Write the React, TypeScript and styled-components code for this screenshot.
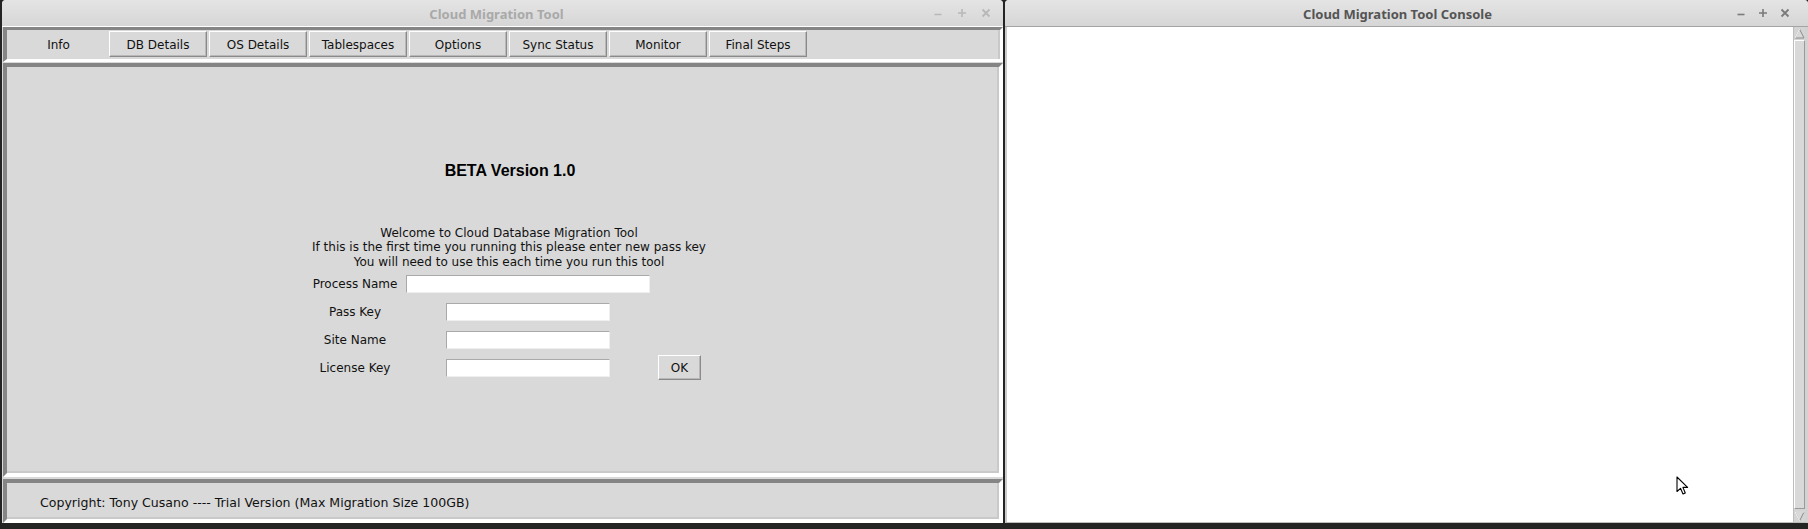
import React from "react";
import styled, { createGlobalStyle } from "styled-components";

const Global = createGlobalStyle`
  html, body { margin: 0; padding: 0; background: #242424; overflow: hidden; }
  #root { width: 1808px; height: 529px; }
  * { box-sizing: border-box; }
`;

const Desktop = styled.div`
  width: 1808px;
  height: 529px;
  background: #242424;
  display: flex;
  align-items: flex-start;
  gap: 2px;
  padding-left: 2px;
`;

const Window = styled.div<{ $w: number }>`
  width: ${(p) => p.$w}px;
  height: 523px;
  flex: none;
  display: flex;
  flex-direction: column;
  background: #d9d9d9;
  border-radius: 4px 4px 0 0;
  overflow: hidden;
`;

const TitleBar = styled.div<{ $active?: boolean; $pr: number }>`
  height: 27px;
  flex: none;
  display: grid;
  grid-template-columns: 1fr auto 1fr;
  align-items: center;
  padding-right: ${(p) => p.$pr}px;
  background: linear-gradient(#e4e4e4, #d6d6d6);
  border-bottom: 1px solid ${(p) => (p.$active ? "#a4a4a4" : "#ffffff")};
  font-family: "Noto Sans", "DejaVu Sans", sans-serif;
  font-weight: 700;
  font-size: 13px;
  color: ${(p) => (p.$active ? "#545454" : "#a9a9a9")};
`;

const Title = styled.div`
  grid-column: 2;
  white-space: nowrap;
  padding-top: 1px;
`;

const Controls = styled.div<{ $gap: number }>`
  grid-column: 3;
  justify-self: end;
  display: flex;
  align-items: center;
  gap: ${(p) => p.$gap}px;
`;

const Sunken = styled.div`
  border-style: solid;
  border-color: #858585 #ffffff #ffffff #858585;
  margin-left: 1px;
  width: 1000px;
  flex: none;
`;

const TabFrame = styled(Sunken)`
  height: 35px;
  border-width: 3px 3px 3px 4px;
  padding: 1px 0 2px 0;
  display: flex;
  gap: 2px;
  box-shadow: inset -2px 0 0 #c9c9c9;
`;

const Tab = styled.div<{ $selected?: boolean }>`
  width: ${(p) => (p.$selected ? 100 : 98)}px;
  height: 26px;
  display: flex;
  align-items: center;
  justify-content: center;
  padding-top: 2px;
  padding-left: ${(p) => (p.$selected ? 3 : 0)}px;
  font-family: "DejaVu Sans", sans-serif;
  font-size: 12px;
  color: #111;
  background: #d9d9d9;
  border: 1px solid;
  border-color: ${(p) => (p.$selected ? "#d9d9d9" : "#ffffff #8a8a8a #8a8a8a #ffffff")};
  box-shadow: ${(p) => (p.$selected ? "none" : "inset -1px -1px 0 #b8b8b8")};
`;

const MainPanel = styled(Sunken)`
  height: 414px;
  margin-top: 1px;
  border-width: 4px;
  display: flex;
  flex-direction: column;
  align-items: center;
  padding-top: 94px;
  box-shadow: inset -2px -2px 0 #c9c9c9;
`;

const Heading = styled.div`
  font-family: "Liberation Sans", Arial, sans-serif;
  font-weight: 700;
  font-size: 16px;
  line-height: 19px;
  color: #000;
  padding-left: 14px;
`;

const Welcome = styled.div`
  margin-top: 46px;
  padding-left: 12px;
  font-family: "DejaVu Sans", sans-serif;
  font-size: 12px;
  line-height: 14.3px;
  color: #111;
  text-align: center;
`;

const FormGrid = styled.div`
  margin-top: 1px;
  margin-left: 7px;
  display: grid;
  grid-template-columns: 102px 244px 59px;
  grid-auto-rows: 28px;
  align-items: center;
  font-family: "DejaVu Sans", sans-serif;
  font-size: 12px;
  color: #111;
`;

const Label = styled.div`
  grid-column: 1;
  text-align: center;
`;

const Entry = styled.div<{ $wide?: boolean }>`
  grid-column: 2;
  justify-self: center;
  width: ${(p) => (p.$wide ? 244 : 164)}px;
  height: 18px;
  background: #ffffff;
  border: 1px solid;
  border-color: #a9a9a9 #efefef #efefef #a9a9a9;
`;

const OkButton = styled.div`
  grid-column: 3;
  justify-self: center;
  width: 43px;
  height: 25px;
  display: flex;
  align-items: center;
  justify-content: center;
  background: #d9d9d9;
  border: 1px solid;
  border-color: #ffffff #8a8a8a #8a8a8a #ffffff;
  box-shadow: inset -1px -1px 0 #b8b8b8;
  font-size: 12px;
  color: #111;
`;

const Footer = styled(Sunken)`
  height: 44px;
  margin-top: 2px;
  border-width: 4px;
  display: flex;
  align-items: center;
  padding-left: 33px;
  padding-top: 2px;
  font-family: "DejaVu Sans", sans-serif;
  font-size: 12.55px;
  color: #111;
  box-shadow: inset -2px -2px 0 #c9c9c9;
`;

const ConsoleBody = styled.div`
  flex: 1;
  display: flex;
  position: relative;
  background: #ffffff;
  border-left: 2px solid #cbcbcb;
  border-right: 3px solid #d2d2d2;
  border-bottom: 1px solid #bdbdbd;
`;

const TextArea = styled.div`
  flex: 1;
  background: #ffffff;
`;

const ScrollBar = styled.div`
  width: 12px;
  flex: none;
  display: flex;
  flex-direction: column;
  background: #d4d4d4;
  border-left: 1px solid #bdbdbd;
`;

const ArrowBox = styled.div`
  height: 12px;
  flex: none;
  display: flex;
  align-items: center;
  justify-content: center;
`;

const Slider = styled.div`
  flex: 1;
  margin: 1px 0;
  background: #d9d9d9;
  border: 1px solid;
  border-color: #ffffff #9a9a9a #9a9a9a #ffffff;
`;

const Cursor = styled.svg`
  position: absolute;
  left: 669px;
  top: 449px;
`;

const WinIcons = ({ color }: { color: string }) => (
  <>
    <svg width="10" height="10" viewBox="0 0 10 10">
      <path d="M1.5 6.5 H8.5" stroke={color} strokeWidth="1.6" />
    </svg>
    <svg width="10" height="10" viewBox="0 0 10 10">
      <path d="M1 5 H9 M5 1 V9" stroke={color} strokeWidth="1.6" />
    </svg>
    <svg width="10" height="10" viewBox="0 0 10 10">
      <path d="M1.5 1.5 L8.5 8.5 M8.5 1.5 L1.5 8.5" stroke={color} strokeWidth="1.8" />
    </svg>
  </>
);

const tabs = ["DB Details", "OS Details", "Tablespaces", "Options", "Sync Status", "Monitor", "Final Steps"];

export default function App() {
  return (
    <>
      <Global />
      <Desktop>
        <Window $w={1001}>
          <TitleBar $pr={12}>
            <Title>Cloud Migration Tool</Title>
            <Controls $gap={14}>
              <WinIcons color="#b8b8b8" />
            </Controls>
          </TitleBar>
          <TabFrame>
            <Tab $selected>Info</Tab>
            {tabs.map((t) => (
              <Tab key={t}>{t}</Tab>
            ))}
          </TabFrame>
          <MainPanel>
            <Heading>BETA Version 1.0</Heading>
            <Welcome>
              Welcome to Cloud Database Migration Tool
              <br />
              If this is the first time you running this please enter new pass key
              <br />
              You will need to use this each time you run this tool
            </Welcome>
            <FormGrid>
              <Label>Process Name</Label>
              <Entry $wide />
              <Label>Pass Key</Label>
              <Entry />
              <Label>Site Name</Label>
              <Entry />
              <Label>License Key</Label>
              <Entry />
              <OkButton>OK</OkButton>
            </FormGrid>
          </MainPanel>
          <Footer>Copyright: Tony Cusano ---- Trial Version (Max Migration Size 100GB)</Footer>
        </Window>
        <Window $w={803}>
          <TitleBar $active $pr={18}>
            <Title>Cloud Migration Tool Console</Title>
            <Controls $gap={12}>
              <WinIcons color="#7a7a7a" />
            </Controls>
          </TitleBar>
          <ConsoleBody>
            <TextArea />
            <ScrollBar>
              <ArrowBox>
                <svg width="11" height="11" viewBox="0 0 11 11">
                  <path d="M5.5 1 L10 10 H1 Z" fill="#d9d9d9" stroke="#8a8a8a" strokeWidth="1" />
                  <path d="M5.5 1 L1 10" stroke="#ffffff" strokeWidth="1" />
                </svg>
              </ArrowBox>
              <Slider />
              <ArrowBox>
                <svg width="11" height="11" viewBox="0 0 11 11">
                  <path d="M1 1 H10 L5.5 10 Z" fill="#d9d9d9" stroke="#8a8a8a" strokeWidth="1" />
                  <path d="M1 1 H10 M1 1 L5.5 10" stroke="#ffffff" strokeWidth="1" />
                </svg>
              </ArrowBox>
            </ScrollBar>
            <Cursor width="14" height="20" viewBox="0 0 14 20">
              <path
                d="M1 1 L1 15.5 L4.5 12.3 L7 18 L9.3 17 L6.9 11.4 L11.6 11.4 Z"
                fill="#ffffff"
                stroke="#000000"
                strokeWidth="1.1"
                strokeLinejoin="round"
              />
            </Cursor>
          </ConsoleBody>
        </Window>
      </Desktop>
    </>
  );
}
